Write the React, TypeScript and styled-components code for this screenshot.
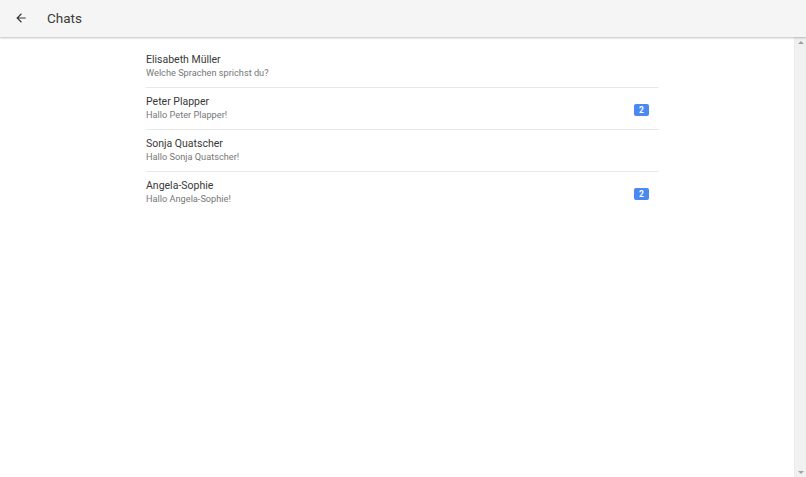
import React from 'react'
import styled, { createGlobalStyle } from 'styled-components'

const GlobalStyle = createGlobalStyle`
  html, body {
    margin: 0;
    padding: 0;
    height: 100%;
    overflow: hidden;
    background: #fff;
    font-family: Roboto, 'Noto Sans', Arial, sans-serif;
  }
  #root {
    height: 100%;
  }
`

const Page = styled.div`
  display: flex;
  flex-direction: column;
  height: 100vh;
`

const Toolbar = styled.header`
  flex-shrink: 0;
  display: flex;
  align-items: center;
  height: 37px;
  padding: 0 0 1px 14px;
  box-sizing: border-box;
  background: #f5f5f5;
  box-shadow: 0 1px 2px rgba(0, 0, 0, 0.25);
  position: relative;
  z-index: 1;
`

const BackButton = styled.button`
  display: flex;
  align-items: center;
  justify-content: center;
  width: 14px;
  height: 14px;
  padding: 0;
  border: 0;
  background: none;
  color: #3a3a3a;
  cursor: pointer;
`

const Title = styled.h1`
  margin: 0 0 0 19px;
  font-size: 13.5px;
  font-weight: 400;
  color: #3a3a3a;
`

const Body = styled.div`
  flex: 1;
  display: flex;
  min-height: 0;
`

const Content = styled.main`
  flex: 1;
  overflow: hidden;
  padding-top: 8px;
`

const ScrollTrack = styled.div`
  flex-shrink: 0;
  width: 11px;
  display: flex;
  flex-direction: column;
  justify-content: space-between;
  align-items: center;
  background: #f1f1f1;
  border-left: 1px solid #ececec;
  padding: 4px 0 3px;
`

const Arrow = styled.span<{ $down?: boolean }>`
  width: 0;
  height: 0;
  border-left: 3px solid transparent;
  border-right: 3px solid transparent;
  ${(p) =>
    p.$down
      ? 'border-top: 3px solid #a3a3a3;'
      : 'border-bottom: 3px solid #a3a3a3;'}
`

const List = styled.ul`
  list-style: none;
  margin: 0 0 0 146px;
  padding: 0;
  width: 513px;
`

const Row = styled.li`
  box-sizing: border-box;
  display: flex;
  align-items: center;
  height: 42px;
  padding-right: 10px;
  & + & {
    border-top: 1px solid #e8e8e8;
    padding-bottom: 1px;
  }
`

const Texts = styled.div`
  flex: 1;
  display: flex;
  flex-direction: column;
`

const Name = styled.span`
  font-size: 10.5px;
  line-height: 14px;
  color: #383838;
`

const Preview = styled.span`
  font-size: 9.2px;
  line-height: 12px;
  color: #777;
`

const Badge = styled.span`
  display: flex;
  align-items: center;
  justify-content: center;
  min-width: 15px;
  height: 12px;
  margin-top: 3px;
  border-radius: 2px;
  background: #4a88f2;
  color: #fff;
  font-size: 8.5px;
  font-weight: 700;
`

const chats = [
  { name: 'Elisabeth Müller', text: 'Welche Sprachen sprichst du?', unread: 0 },
  { name: 'Peter Plapper', text: 'Hallo Peter Plapper!', unread: 2 },
  { name: 'Sonja Quatscher', text: 'Hallo Sonja Quatscher!', unread: 0 },
  { name: 'Angela-Sophie', text: 'Hallo Angela-Sophie!', unread: 2 },
]

export default function App() {
  return (
    <Page>
      <GlobalStyle />
      <Toolbar>
        <BackButton aria-label="back">
          <svg width="14" height="14" viewBox="0 0 24 24" fill="currentColor">
            <path d="M20 11H7.83l5.59-5.59L12 4l-8 8 8 8 1.41-1.41L7.83 13H20v-2z" />
          </svg>
        </BackButton>
        <Title>Chats</Title>
      </Toolbar>
      <Body>
        <Content>
          <List>
            {chats.map((c) => (
              <Row key={c.name}>
                <Texts>
                  <Name>{c.name}</Name>
                  <Preview>{c.text}</Preview>
                </Texts>
                {c.unread > 0 && <Badge>{c.unread}</Badge>}
              </Row>
            ))}
          </List>
        </Content>
        <ScrollTrack>
          <Arrow />
          <Arrow $down />
        </ScrollTrack>
      </Body>
    </Page>
  )
}
